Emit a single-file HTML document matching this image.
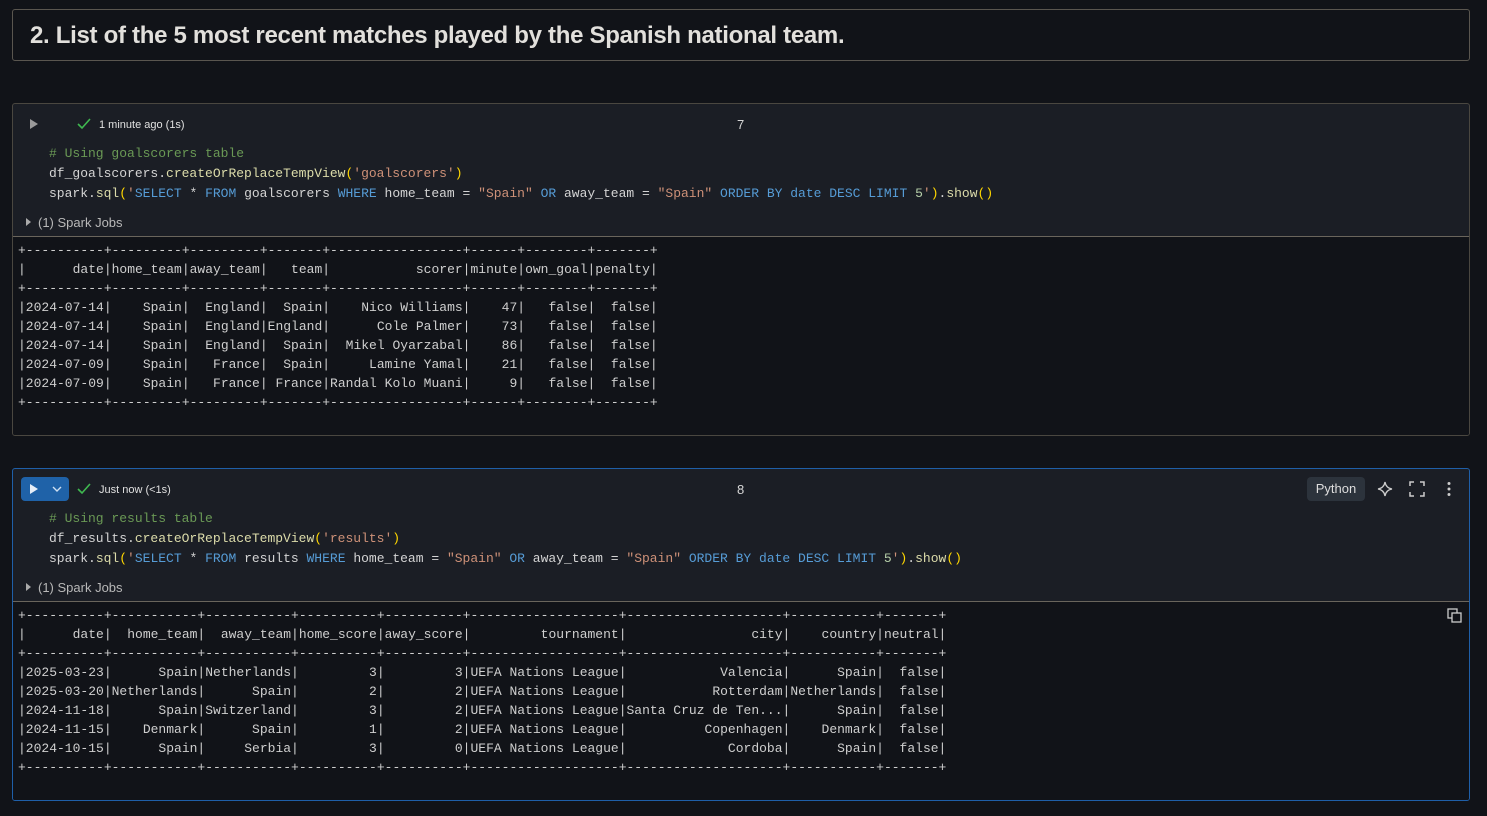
<!DOCTYPE html>
<html><head><meta charset="utf-8"><style>
body{margin:0;width:1487px;height:816px;background:#111318;overflow:hidden;position:relative;font-family:"Liberation Sans",sans-serif;color:#d6d6d6}
.abs{position:absolute}
.title{left:12px;top:9px;width:1458px;height:52px;border:1px solid #5a564f;border-radius:3px;box-sizing:border-box}
.title span{position:absolute;left:17px;top:12px;font-size:24px;font-weight:bold;color:#e2e0dc;letter-spacing:-0.3px}
.cell{left:12px;width:1458px;border:1px solid #4a4740;border-radius:3px;box-sizing:border-box;background:#1b1e25;overflow:hidden}
.out{position:absolute;left:0;right:0;bottom:0;background:#111318;border-top:1px solid #6a655c}
pre{margin:0;font-family:"Liberation Mono",monospace;font-size:13px;color:#d4d4d4}
.code{position:absolute;left:36px;line-height:20px}
.tbl{position:absolute;left:5px;line-height:19px;color:#cfcfcf}
.c{color:#6a9955}.s{color:#ce9178}.k{color:#569cd6}.f{color:#dcdcaa}.p{color:#ffd700}.n{color:#b5cea8}
.small{font-size:11px;color:#e0e0e0}
.jobs{font-size:13px;color:#b8b8b8}
</style></head><body>
<div class="abs title"><span>2. List of the 5 most recent matches played by the Spanish national team.</span></div>

<div class="abs cell" style="top:103px;height:333px">
  <svg class="abs" style="left:16px;top:15px" width="10" height="10"><path d="M1 0 L9 5 L1 10Z" fill="#9a9a9a"/></svg>
  <svg class="abs" style="left:64px;top:14px" width="14" height="12"><path d="M1 6 L5 10 L13 1" stroke="#3fb950" stroke-width="1.6" fill="none"/></svg>
  <div class="abs small" style="left:86px;top:15px">1 minute ago (1s)</div>
  <div class="abs" style="left:724px;top:13px;font-size:13px">7</div>
  <pre class="code" style="top:40px"><span class="c"># Using goalscorers table</span>
df_goalscorers.<span class="f">createOrReplaceTempView</span><span class="p">(</span><span class="s">'goalscorers'</span><span class="p">)</span>
spark.<span class="f">sql</span><span class="p">(</span><span class="s">'</span><span class="k">SELECT</span> * <span class="k">FROM</span> goalscorers <span class="k">WHERE</span> home_team = <span class="s">"Spain"</span> <span class="k">OR</span> away_team = <span class="s">"Spain"</span> <span class="k">ORDER BY date DESC LIMIT</span> <span class="n">5</span><span class="s">'</span><span class="p">)</span>.<span class="f">show</span><span class="p">()</span></pre>
  <svg class="abs" style="left:13px;top:114px" width="6" height="8"><path d="M0 0 L5 4 L0 8Z" fill="#aaa"/></svg>
  <div class="abs jobs" style="left:25px;top:111px">(1) Spark Jobs</div>
  <div class="out" style="top:132px">
<pre class="tbl" style="top:4px">+----------+---------+---------+-------+-----------------+------+--------+-------+
|      date|home_team|away_team|   team|           scorer|minute|own_goal|penalty|
+----------+---------+---------+-------+-----------------+------+--------+-------+
|2024-07-14|    Spain|  England|  Spain|    Nico Williams|    47|   false|  false|
|2024-07-14|    Spain|  England|England|      Cole Palmer|    73|   false|  false|
|2024-07-14|    Spain|  England|  Spain|  Mikel Oyarzabal|    86|   false|  false|
|2024-07-09|    Spain|   France|  Spain|     Lamine Yamal|    21|   false|  false|
|2024-07-09|    Spain|   France| France|Randal Kolo Muani|     9|   false|  false|
+----------+---------+---------+-------+-----------------+------+--------+-------+</pre>
  </div>
</div>

<div class="abs cell" style="top:468px;height:333px;border-color:#1f5fa8">
  <div class="abs" style="left:8px;top:8px;width:48px;height:24px;background:#1f62a8;border-radius:4px"></div>
  <svg class="abs" style="left:16px;top:15px" width="10" height="10"><path d="M1 0 L9 5 L1 10Z" fill="#e6eef8"/></svg>
  <svg class="abs" style="left:39px;top:17px" width="10" height="7"><path d="M1 1 L5 5 L9 1" stroke="#cfe0f2" stroke-width="1.4" fill="none"/></svg>
  <svg class="abs" style="left:64px;top:14px" width="14" height="12"><path d="M1 6 L5 10 L13 1" stroke="#3fb950" stroke-width="1.6" fill="none"/></svg>
  <div class="abs small" style="left:86px;top:15px">Just now (&lt;1s)</div>
  <div class="abs" style="left:724px;top:13px;font-size:13px">8</div>
  <div class="abs" style="left:1294px;top:8px;width:58px;height:24px;background:#2c333c;border-radius:4px;font-size:13px;color:#ddd;text-align:center;line-height:24px">Python</div>
  <svg class="abs" style="left:1364px;top:12px" width="16" height="16"><path d="M8 1 Q9 7 15 8 Q9 9 8 15 Q7 9 1 8 Q7 7 8 1Z" stroke="#ccc" stroke-width="1.3" fill="none"/></svg>
  <svg class="abs" style="left:1396px;top:12px" width="16" height="16"><path d="M1 5V1H5M11 1H15V5M15 11V15H11M5 15H1V11" stroke="#ccc" stroke-width="1.5" fill="none"/></svg>
  <svg class="abs" style="left:1433px;top:12px" width="6" height="16"><circle cx="3" cy="2.5" r="1.5" fill="#ccc"/><circle cx="3" cy="8" r="1.5" fill="#ccc"/><circle cx="3" cy="13.5" r="1.5" fill="#ccc"/></svg>
  <pre class="code" style="top:40px"><span class="c"># Using results table</span>
df_results.<span class="f">createOrReplaceTempView</span><span class="p">(</span><span class="s">'results'</span><span class="p">)</span>
spark.<span class="f">sql</span><span class="p">(</span><span class="s">'</span><span class="k">SELECT</span> * <span class="k">FROM</span> results <span class="k">WHERE</span> home_team = <span class="s">"Spain"</span> <span class="k">OR</span> away_team = <span class="s">"Spain"</span> <span class="k">ORDER BY date DESC LIMIT</span> <span class="n">5</span><span class="s">'</span><span class="p">)</span>.<span class="f">show</span><span class="p">()</span></pre>
  <svg class="abs" style="left:13px;top:114px" width="6" height="8"><path d="M0 0 L5 4 L0 8Z" fill="#aaa"/></svg>
  <div class="abs jobs" style="left:25px;top:111px">(1) Spark Jobs</div>
  <div class="out" style="top:132px">
  <svg class="abs" style="left:1434px;top:6px" width="16" height="16"><rect x="1" y="1" width="9" height="9" stroke="#ccc" stroke-width="1.3" fill="none"/><rect x="5" y="5" width="9" height="9" stroke="#ccc" stroke-width="1.3" fill="#111318"/></svg>
<pre class="tbl" style="top:4px">+----------+-----------+-----------+----------+----------+-------------------+--------------------+-----------+-------+
|      date|  home_team|  away_team|home_score|away_score|         tournament|                city|    country|neutral|
+----------+-----------+-----------+----------+----------+-------------------+--------------------+-----------+-------+
|2025-03-23|      Spain|Netherlands|         3|         3|UEFA Nations League|            Valencia|      Spain|  false|
|2025-03-20|Netherlands|      Spain|         2|         2|UEFA Nations League|           Rotterdam|Netherlands|  false|
|2024-11-18|      Spain|Switzerland|         3|         2|UEFA Nations League|Santa Cruz de Ten...|      Spain|  false|
|2024-11-15|    Denmark|      Spain|         1|         2|UEFA Nations League|          Copenhagen|    Denmark|  false|
|2024-10-15|      Spain|     Serbia|         3|         0|UEFA Nations League|             Cordoba|      Spain|  false|
+----------+-----------+-----------+----------+----------+-------------------+--------------------+-----------+-------+</pre>
  </div>
</div>
</body></html>
